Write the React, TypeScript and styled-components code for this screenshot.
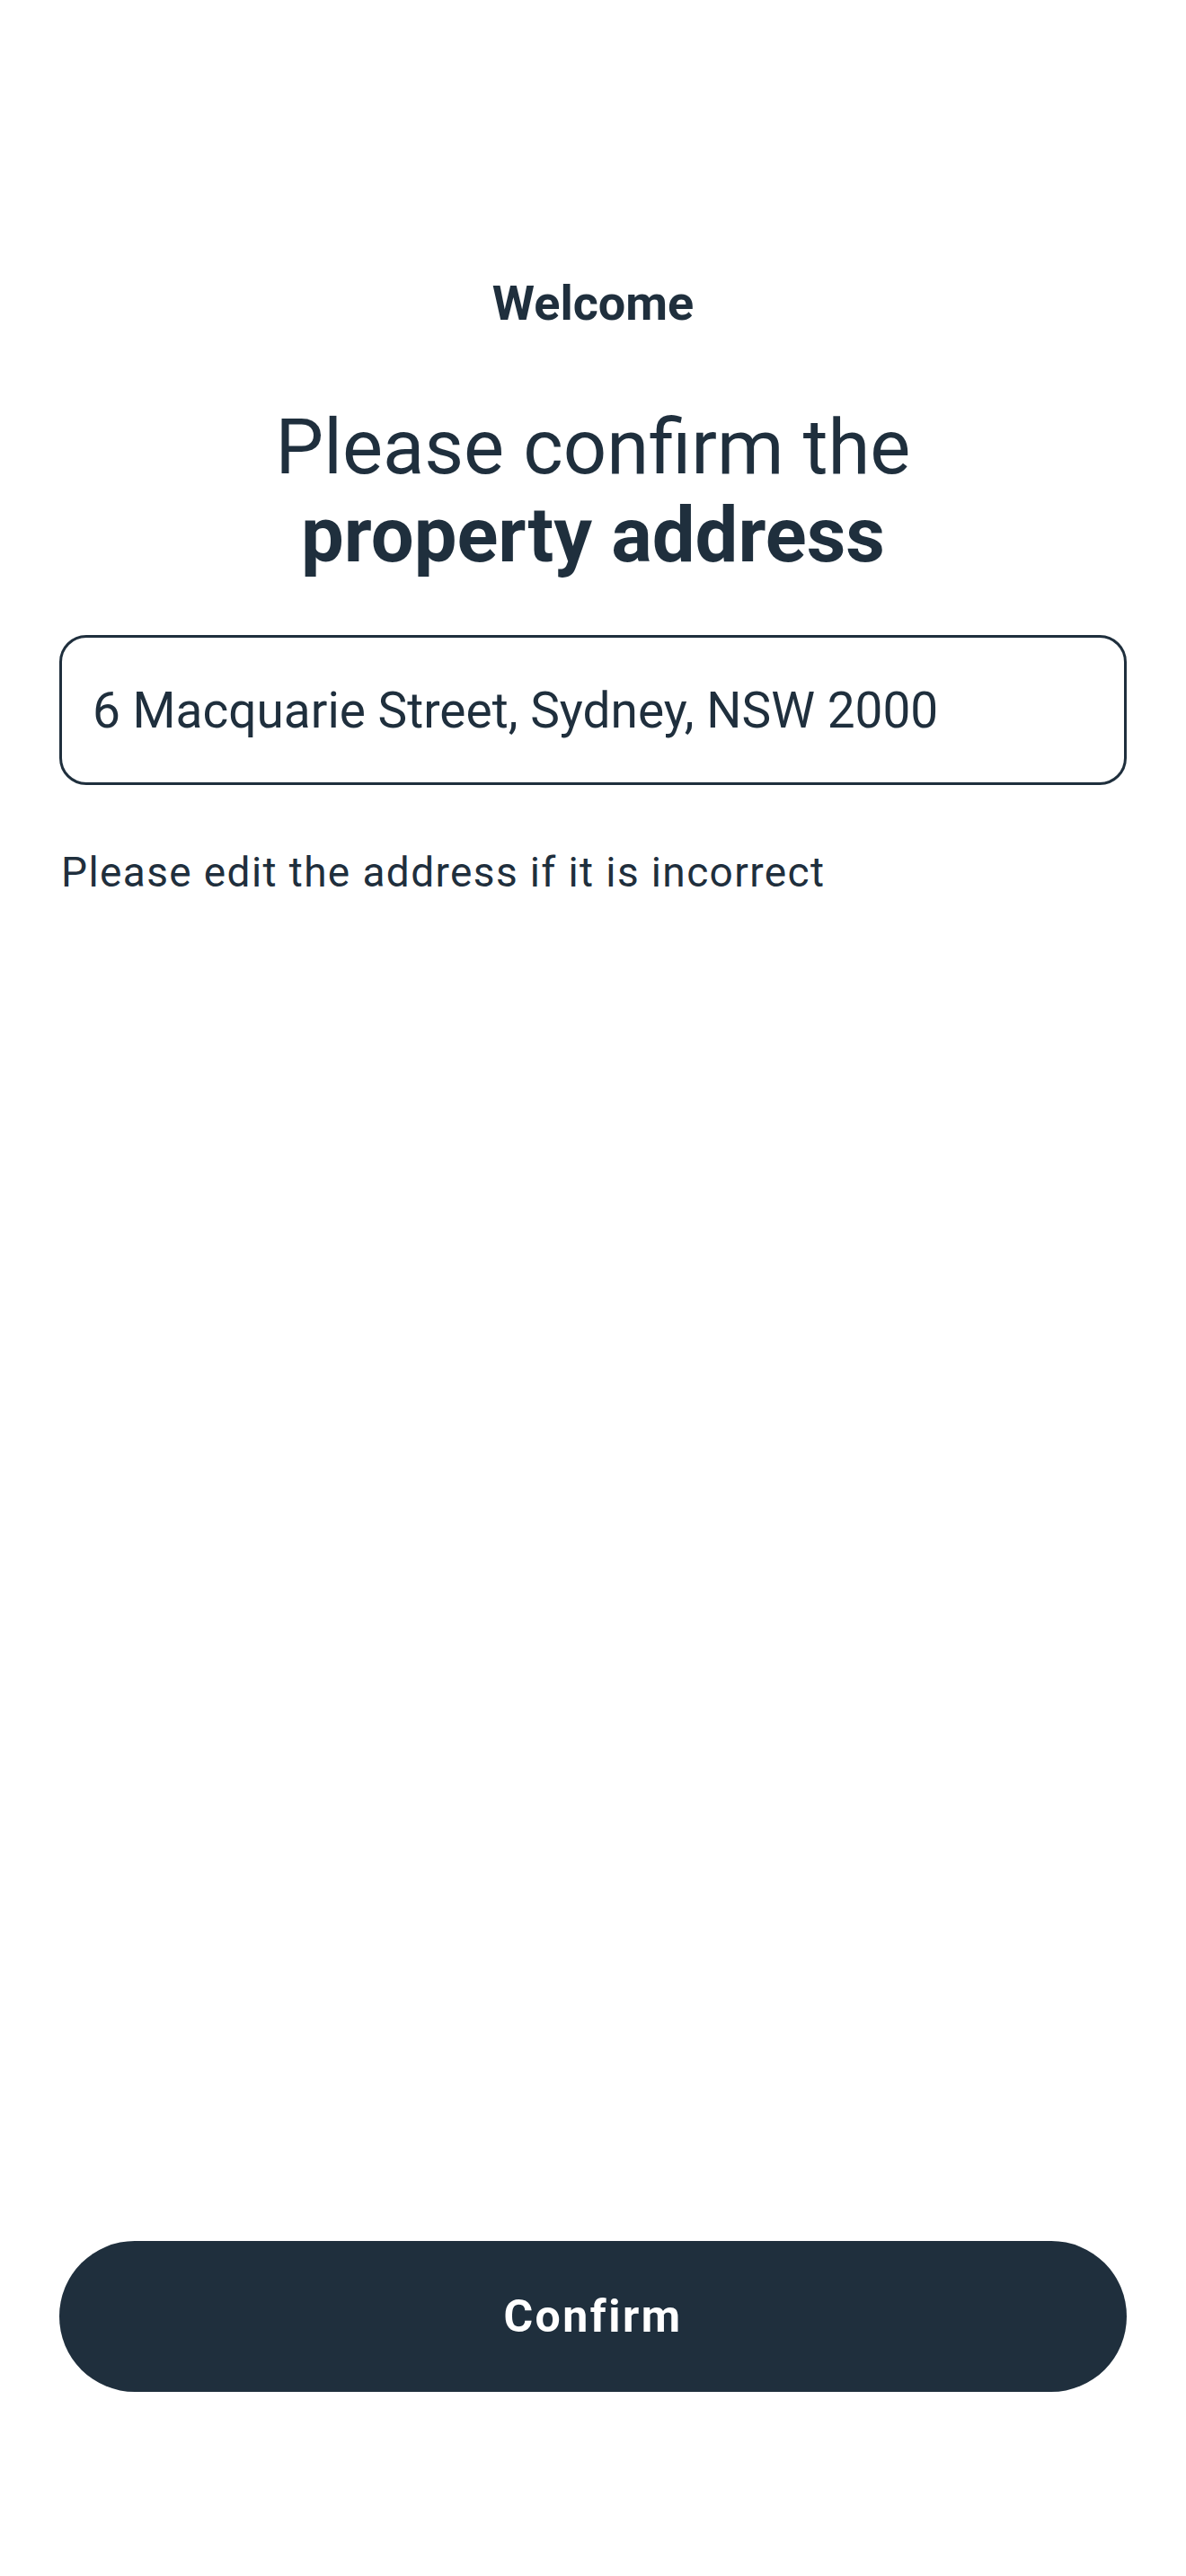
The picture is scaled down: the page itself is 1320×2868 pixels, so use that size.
import React from 'react';
import styled, {createGlobalStyle} from "styled-components";

const GlobalStyle = createGlobalStyle`
    html, body {
        margin: 0;
        padding: 0;
        background: #ffffff;
    }
    body {
        font-family: Roboto, "Noto Sans", "Liberation Sans", sans-serif;
        color: #1f2f3d;
    }
`

const Screen = styled.div`
    min-height: 2868px;
    box-sizing: border-box;
    display: flex;
    flex-direction: column;
    padding: 306px 66px 205px;
`

const Title = styled.div`
    text-align: center;
    font-size: 54px;
    line-height: 64px;
    font-weight: 700;
`

const Heading = styled.h1`
    margin: 79px 0 0;
    text-align: center;
    font-size: 85px;
    line-height: 98px;
    font-weight: 400;

    strong {
        font-weight: 700;
    }
`

const AddressField = styled.input`
    margin-top: 62px;
    height: 167px;
    box-sizing: border-box;
    width: 100%;
    border: 3px solid #1f2f3d;
    border-radius: 30px;
    padding: 0 34px;
    font-family: inherit;
    font-size: 55px;
    color: #1f2f3d;
    background: #ffffff;
    outline: none;
`

const Hint = styled.p`
    margin: 70px 0 0;
    font-size: 46px;
    line-height: 54px;
    letter-spacing: 0.03em;
    padding-left: 2px;
`

const Footer = styled.div`
    margin-top: auto;
`

const Button = styled.button`
    width: 100%;
    height: 168px;
    border: none;
    border-radius: 84px;
    background: #1f2f3d;
    color: #ffffff;
    font-family: inherit;
    font-size: 50px;
    font-weight: 700;
    letter-spacing: 0.05em;
    cursor: pointer;
`

const App = () => {
    return (
        <>
            <GlobalStyle/>
            <Screen>
                <Title>Welcome</Title>
                <Heading>
                    Please confirm the<br/>
                    <strong>property address</strong>
                </Heading>
                <AddressField type="text" defaultValue="6 Macquarie Street, Sydney, NSW 2000"/>
                <Hint>Please edit the address if it is incorrect</Hint>
                <Footer>
                    <Button>Confirm</Button>
                </Footer>
            </Screen>
        </>
    );
};

export default App;
